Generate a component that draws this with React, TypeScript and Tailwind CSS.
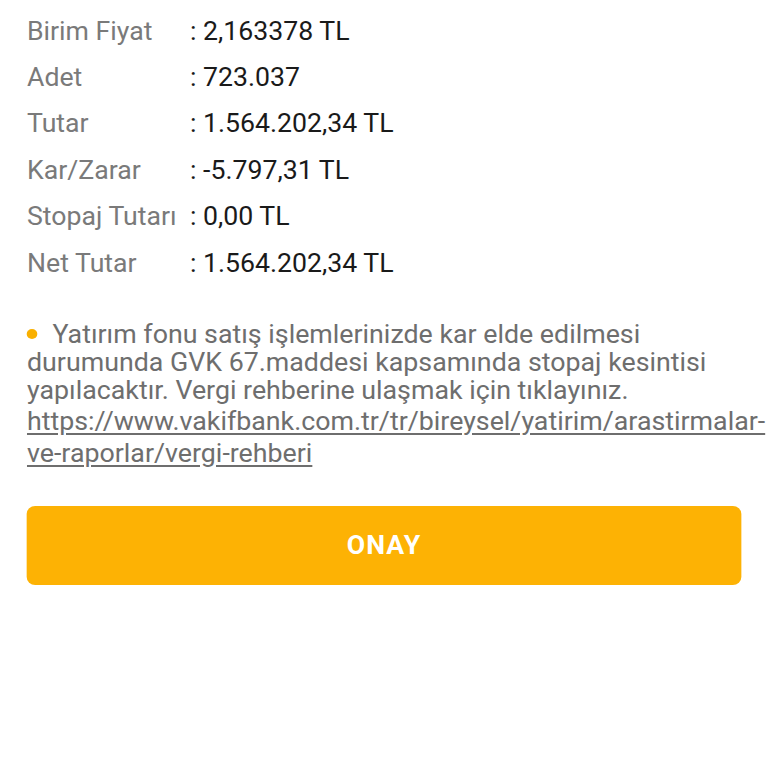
import React from "react";

const rows: [string, string][] = [
  ["Birim Fiyat", "2,163378 TL"],
  ["Adet", "723.037"],
  ["Tutar", "1.564.202,34 TL"],
  ["Kar/Zarar", "-5.797,31 TL"],
  ["Stopaj Tutarı", "0,00 TL"],
  ["Net Tutar", "1.564.202,34 TL"],
];

export default function App() {
  return (
    <div className="w-[768px] h-[768px] bg-white overflow-hidden" style={{ fontFamily: "Roboto, 'Noto Sans', sans-serif" }}>
      <div className="w-[720px] origin-top-left scale-x-[1.0667]">
        <div className="pl-[25.3px] pt-[8px] flex flex-col">
          {rows.map(([k, v]) => (
            <div key={k} className="flex h-[46.4px] items-center text-[25px] leading-none">
              <span className="w-[152.8px] text-[#7a7a7a]">{k}</span>
              <span className="text-[#1a1a1a]">: {v}</span>
            </div>
          ))}
        </div>
        <div className="mt-[34.5px] pl-[25.3px] pr-[1px] text-[25.1px] text-[#6e6e6e]">
          <p className="leading-[28px]">
            <span className="inline-block w-[9.4px] h-[9.4px] rounded-full bg-[#f9b000] mr-[14.5px] mb-[4px]"></span>
            Yatırım fonu satış işlemlerinizde kar elde edilmesi durumunda GVK 67.maddesi kapsamında stopaj kesintisi yapılacaktır. Vergi rehberine ulaşmak için tıklayınız.
          </p>
          <p className="leading-[32px] underline underline-offset-[3px] mt-[1px]">
            https://www.vakifbank.com.tr/tr/bireysel/yatirim/arastirmalar-ve-raporlar/vergi-rehberi
          </p>
        </div>
        <div className="pl-[25.3px] mt-[36.5px]">
          <button className="w-[669.4px] h-[79px] rounded-[8px] bg-[#fdb204] text-white font-bold text-[25px] tracking-[1px] flex items-center justify-center">
            ONAY
          </button>
        </div>
      </div>
    </div>
  );
}
